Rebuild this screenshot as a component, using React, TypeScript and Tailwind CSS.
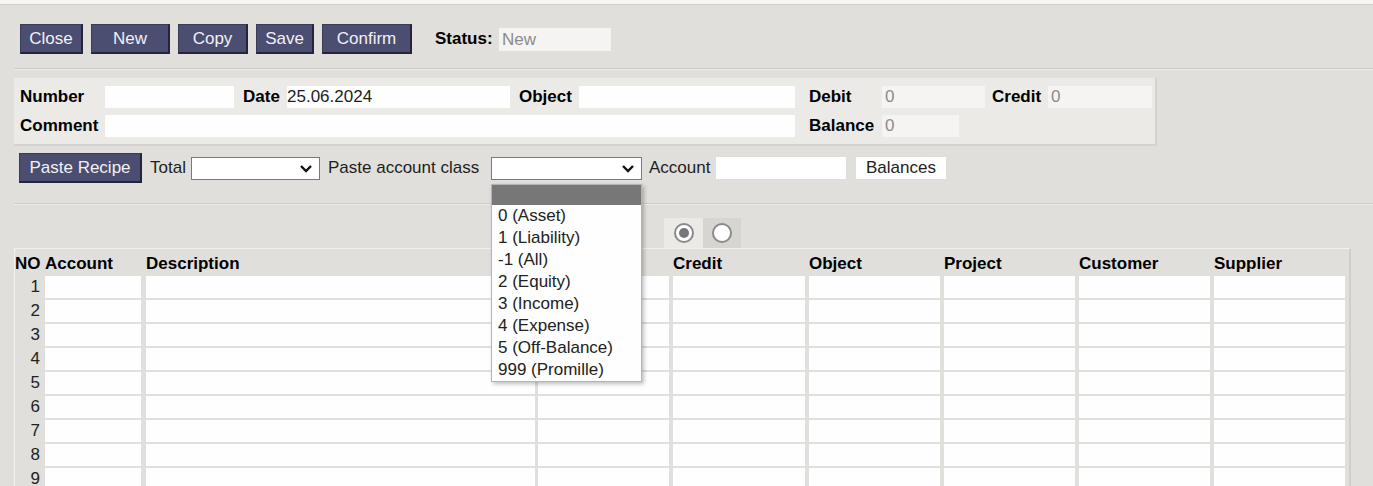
import React from "react";

const btn =
  "h-[30px] bg-[#4b4d71] text-[#f1f1f4] text-[17px] leading-none border border-[#3a3b55] border-r-2 border-b-2 border-r-[#24243a] border-b-[#24243a] flex items-center justify-center";

function Chevron() {
  return (
    <svg width="14" height="10" viewBox="0 0 14 10" className="absolute right-[6px] top-[6px]">
      <polyline points="2,2 7,7 12,2" fill="none" stroke="#111" strokeWidth="2.4" />
    </svg>
  );
}

function Select({ w }: { w: string }) {
  return <div className={`relative h-[23px] bg-white border border-[#7a7a7a] ${w}`}><Chevron /></div>;
}

const classes = [
  "0 (Asset)",
  "1 (Liability)",
  "-1 (All)",
  "2 (Equity)",
  "3 (Income)",
  "4 (Expense)",
  "5 (Off-Balance)",
  "999 (Promille)",
];

const cols = [
  { name: "Account", w: "w-[96px]" },
  { name: "Description", w: "w-[389px]" },
  { name: "Debit", w: "w-[131px]" },
  { name: "Credit", w: "w-[132px]" },
  { name: "Object", w: "w-[131px]" },
  { name: "Project", w: "w-[131px]" },
  { name: "Customer", w: "w-[131px]" },
  { name: "Supplier", w: "w-[131px]" },
];

const gapFor = (i: number) => (i === 1 ? "ml-[5px]" : i === 2 ? "ml-[3px]" : i > 2 ? "ml-[4px]" : "");

export default function App() {
  const rows = Array.from({ length: 11 }, (_, i) => i + 1);
  return (
    <div className="w-[1373px] h-[486px] overflow-hidden bg-[#e0dfdb] font-['Liberation_Sans',Arial,sans-serif] text-[17px] text-[#1e1e1e]">
      <div className="h-[5px] bg-[#f6f6f5] border-b border-[#cfceca]" />
      <div className="pl-[14px]">
        {/* action buttons */}
        <div className="flex items-center mt-[19px] pl-[6px]">
          <div className="flex gap-[8px]">
            <button className={`${btn} w-[63px]`}>Close</button>
            <button className={`${btn} w-[79px]`}>New</button>
            <button className={`${btn} w-[70px]`}>Copy</button>
            <button className={`${btn} w-[58px]`}>Save</button>
            <button className={`${btn} w-[90px]`}>Confirm</button>
          </div>
          <span className="ml-[23px] w-[64px] font-bold text-black whitespace-nowrap">Status:</span>
          <div className="w-[112px] h-[23px] bg-[#f6f4f2] text-[#8b8b8b] pl-[3px] leading-[23px]">New</div>
        </div>

        <div className="mt-[14px] h-[2px] bg-[#cbcac6] border-b border-[#ecebe8]" />

        {/* header fields */}
        <div className="mt-[8px] w-[1143px] bg-[#ebeae7] border-r-2 border-b-2 border-[#d3d2ce] pl-[6px] pt-[8px] pb-[7px] flex flex-col gap-[7px]">
          <div className="flex items-center h-[22px] whitespace-nowrap">
            <span className="w-[85px] font-bold text-black">Number</span>
            <div className="w-[129px] h-[22px] bg-[#fdfefd]" />
            <span className="ml-[9px] w-[44px] font-bold text-black">Date</span>
            <div className="w-[223px] h-[22px] bg-[#fdfefd] leading-[22px]">25.06.2024</div>
            <span className="ml-[9px] w-[60px] font-bold text-black">Object</span>
            <div className="w-[216px] h-[22px] bg-[#fdfefd]" />
            <span className="ml-[14px] w-[73px] font-bold text-black">Debit</span>
            <div className="w-[103px] h-[22px] bg-[#f6f4f3] text-[#8b8b8b] leading-[22px] pl-[3px]">0</div>
            <span className="ml-[7px] w-[56px] font-bold text-black">Credit</span>
            <div className="w-[104px] h-[22px] bg-[#f6f4f3] text-[#8b8b8b] leading-[22px] pl-[3px]">0</div>
          </div>
          <div className="flex items-center h-[22px] whitespace-nowrap">
            <span className="w-[85px] font-bold text-black">Comment</span>
            <div className="w-[690px] h-[22px] bg-[#fdfefd]" />
            <span className="ml-[14px] w-[73px] font-bold text-black">Balance</span>
            <div className="w-[77px] h-[22px] bg-[#f6f4f3] text-[#8b8b8b] leading-[22px] pl-[3px]">0</div>
          </div>
        </div>

        {/* toolbar */}
        <div className="mt-[7px] pl-[5px] flex items-center h-[30px] whitespace-nowrap">
          <button className={`${btn} w-[123px]`}>Paste Recipe</button>
          <span className="ml-[8px] w-[41px]">Total</span>
          <Select w="w-[129px]" />
          <span className="ml-[8px] w-[163px]">Paste account class</span>
          <div className="relative">
            <Select w="w-[151px]" />
            <div className="absolute left-0 top-[27px] w-[151px] bg-[#fdfefd] border border-[#b4b4b4] shadow-[2px_2px_4px_rgba(0,0,0,0.25)] z-10">
              <div className="h-[20px] bg-[#777777]" />
              {classes.map((c) => (
                <div key={c} className="h-[22px] leading-[22px] pl-[6px] text-[#222]">{c}</div>
              ))}
            </div>
          </div>
          <span className="ml-[7px] w-[67px]">Account</span>
          <div className="w-[130px] h-[22px] bg-white" />
          <div className="ml-[10px] w-[90px] h-[22px] bg-white text-center leading-[22px] text-[#222]">Balances</div>
        </div>

        <div className="mt-[20px] h-[2px] bg-[#cdccc8] border-b border-[#ecebe8]" />

        {/* radio tabs */}
        <div className="mt-[13px] flex pl-[650px]">
          <div className="w-[39px] h-[30px] bg-[#eceae7] flex items-center justify-center">
            <div className="w-[20px] h-[20px] rounded-full border-2 border-[#8a8a8a] bg-white flex items-center justify-center">
              <div className="w-[10px] h-[10px] rounded-full bg-[#777]" />
            </div>
          </div>
          <div className="w-[38px] h-[30px] bg-[#d6d5d2] flex items-center justify-center">
            <div className="w-[20px] h-[20px] rounded-full border-2 border-[#8a8a8a] bg-white" />
          </div>
        </div>

        {/* rows table */}
        <div className="w-[1337px] border-t border-l border-[#f2f1ee] border-r-2 border-r-[#cfceca]">
          <div className="flex h-[27px] items-end pb-[2px] font-bold text-black leading-[20px] whitespace-nowrap">
            <div className="w-[30px]">NO</div>
            {cols.map((c, i) => (
              <div key={c.name} className={`${c.w} ${gapFor(i)}`}>
                {c.name}
              </div>
            ))}
          </div>
          <div className="flex flex-col gap-[2px]">
            {rows.map((r) => (
              <div key={r} className="flex h-[22px]">
                <div className="w-[30px] text-right pr-[5px] leading-[22px] text-[#222]">{r}</div>
                {cols.map((c, i) => (
                  <div key={c.name} className={`${c.w} h-[22px] bg-[#fdfefd] ${gapFor(i)}`} />
                ))}
              </div>
            ))}
          </div>
        </div>
      </div>
    </div>
  );
}
